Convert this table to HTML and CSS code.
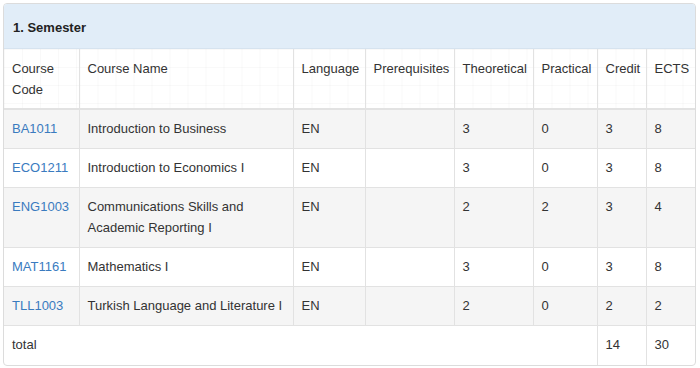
FILE: index.html
```html
<!DOCTYPE html>
<html>
<head>
<meta charset="utf-8">
<link rel="stylesheet" href="styles.css">
</head>
<body>
<div class="panel">
  <div class="panel-heading">1. Semester</div>
  <table class="courses">
    <colgroup>
      <col class="c-code"><col class="c-name"><col class="c-lang"><col class="c-pre">
      <col class="c-theo"><col class="c-prac"><col class="c-cred"><col class="c-ects">
    </colgroup>
    <thead>
      <tr>
        <th>Course Code</th><th>Course Name</th><th>Language</th><th>Prerequisites</th>
        <th>Theoretical</th><th>Practical</th><th>Credit</th><th>ECTS</th>
      </tr>
    </thead>
    <tbody>
      <tr class="odd"><td><a href="#">BA1011</a></td><td>Introduction to Business</td><td>EN</td><td></td><td>3</td><td>0</td><td>3</td><td>8</td></tr>
      <tr><td><a href="#">ECO1211</a></td><td>Introduction to Economics I</td><td>EN</td><td></td><td>3</td><td>0</td><td>3</td><td>8</td></tr>
      <tr class="odd"><td><a href="#">ENG1003</a></td><td>Communications Skills and Academic Reporting I</td><td>EN</td><td></td><td>2</td><td>2</td><td>3</td><td>4</td></tr>
      <tr><td><a href="#">MAT1161</a></td><td>Mathematics I</td><td>EN</td><td></td><td>3</td><td>0</td><td>3</td><td>8</td></tr>
      <tr class="odd"><td><a href="#">TLL1003</a></td><td>Turkish Language and Literature I</td><td>EN</td><td></td><td>2</td><td>0</td><td>2</td><td>2</td></tr>
      <tr class="total"><td colspan="6">total</td><td>14</td><td>30</td></tr>
    </tbody>
  </table>
</div>
</body>
</html>
```
FILE: styles.css
```css
html, body {
  margin: 0;
  padding: 0;
  background: #ffffff;
}
body {
  padding: 3px 4px 0 3px;
  font-family: "Liberation Sans", Arial, sans-serif;
  font-size: 13px;
  color: #333333;
}
.panel {
  border: 1px solid #dcdcdc;
  border-radius: 4px;
  overflow: hidden;
  background: #fff;
}
.panel-heading {
  background: #e1edf8;
  border-bottom: 1px solid #d6e3ef;
  padding: 0 9px;
  height: 44px;
  line-height: 47px;
  font-weight: bold;
  color: #222;
}
.courses {
  width: 100%;
  border-collapse: collapse;
  table-layout: fixed;
}
.c-code { width: 75px; }
.c-name { width: 214px; }
.c-lang { width: 72px; }
.c-pre { width: 89px; }
.c-theo { width: 79px; }
.c-prac { width: 64px; }
.c-cred { width: 49px; }
.c-ects { width: auto; }
.courses th, .courses td {
  text-align: left;
  vertical-align: top;
  font-weight: normal;
  padding: 9px 8px 9px 8px;
  line-height: 21px;
  border-left: 1px solid #e2e2e2;
  border-top: 1px solid #e2e2e2;
}
.courses th:first-child, .courses td:first-child {
  border-left: none;
}
.courses thead th {
  border-top: none;
  border-bottom: 2px solid #e2e2e2;
  padding-top: 9px;
  padding-bottom: 8px;
  background-color: #fff;
  background-image:
    linear-gradient(to right, rgba(0,0,0,0.025) 1px, transparent 1px),
    linear-gradient(to bottom, rgba(0,0,0,0.025) 1px, transparent 1px);
  background-size: 18px 18px;
}
.courses tbody td {
  padding-top: 8px;
  padding-bottom: 9px;
}
.courses tbody tr.odd td {
  background: #f5f5f5;
}
.courses a {
  color: #3a7bbf;
  text-decoration: none;
}
.courses tbody tr.total td {
  padding-top: 8px;
  padding-bottom: 10px;
}
```
